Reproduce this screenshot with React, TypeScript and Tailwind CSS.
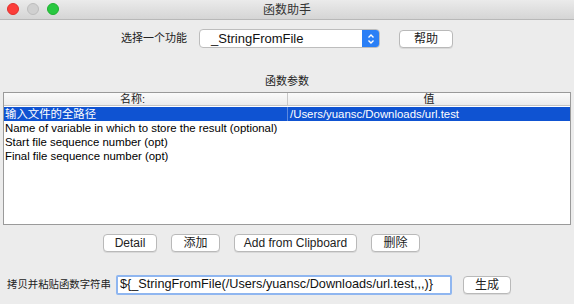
import React from 'react'

const ui = { fontFamily: '"Liberation Sans", "Noto Sans CJK SC", sans-serif' }

function MacButton({ label, w }: { label: string; w: string }) {
  return (
    <div
      className={`${w} h-[18px] flex items-center justify-center rounded-[4px] border border-[#b9b9b9] bg-white text-[12px] text-[#222] shadow-[0_1px_0_rgba(0,0,0,0.08)]`}
    >
      {label}
    </div>
  )
}

export default function App() {
  const rows = [
    'Name of variable in which to store the result (optional)',
    'Start file sequence number (opt)',
    'Final file sequence number (opt)',
  ]

  return (
    <div className="w-[574px] h-[304px] bg-[#ececec] flex flex-col overflow-hidden" style={ui}>
      {/* title bar */}
      <div className="relative h-[20px] shrink-0 flex items-center justify-center bg-gradient-to-b from-[#ebebeb] to-[#d5d5d5] border-b border-[#b8b8b8]">
        <div className="absolute left-[7px] top-[3px] flex gap-[8px]">
          <div className="w-[12px] h-[12px] rounded-full bg-[#fc3d39] border border-[#e0302c]" />
          <div className="w-[12px] h-[12px] rounded-full bg-[#d0d0d0] border border-[#bdbdbd]" />
          <div className="w-[12px] h-[12px] rounded-full bg-[#28c840] border border-[#1fb131]" />
        </div>
        <span className="text-[12px] text-[#333]">函数助手</span>
      </div>

      {/* function select */}
      <div className="mt-[9px] h-[19px] flex items-center justify-center">
        <span className="text-[11px] text-[#222] whitespace-nowrap">选择一个功能</span>
        <div className="ml-[12px] w-[181px] h-[19px] flex items-stretch rounded-[4px] border border-[#bdbdbd] bg-white overflow-hidden">
          <span className="flex-1 pl-[11px] text-[13px] leading-[17px] text-[#111]">_StringFromFile</span>
          <div className="w-[17px] bg-[#2a7ff6] flex items-center justify-center">
            <svg width="8" height="12" viewBox="0 0 8 12" fill="none" stroke="white" strokeWidth="1.4">
              <path d="M1.5 4.5 L4 2 L6.5 4.5" />
              <path d="M1.5 7.5 L4 10 L6.5 7.5" />
            </svg>
          </div>
        </div>
        <div className="ml-[19px]">
          <MacButton label="帮助" w="w-[54px]" />
        </div>
      </div>

      <div className="mt-[26px] text-center text-[11px] leading-[14px] text-[#222]">函数参数</div>

      {/* table */}
      <div className="mt-[4px] mx-[3px] h-[133px] border border-[#9a9a9a] bg-white flex flex-col text-[11.4px]">
        <div className="h-[13px] flex bg-gradient-to-b from-[#fbfbfb] to-[#ececec] border-b border-[#c4c4c4] text-[#222] leading-[12px] text-[11px]">
          <div className="w-[284px] text-center pr-[26px] border-r border-[#c8c8c8]">名称:</div>
          <div className="flex-1 text-center">值</div>
        </div>
        <div className="h-[14px] mt-[1px] flex bg-[#0f53d2] text-white leading-[14px]">
          <div className="w-[284px] pl-[1px] border-r border-[#5c88df]">输入文件的全路径</div>
          <div className="flex-1 pl-[2px]">/Users/yuansc/Downloads/url.test</div>
        </div>
        {rows.map(r => (
          <div key={r} className="h-[14px] pl-[1px] leading-[14px] text-black">{r}</div>
        ))}
      </div>

      {/* action buttons */}
      <div className="mt-[9px] pl-[103px] flex gap-[14px]">
        <MacButton label="Detail" w="w-[54px]" />
        <MacButton label="添加" w="w-[49px]" />
        <MacButton label="Add from Clipboard" w="w-[123px]" />
        <MacButton label="删除" w="w-[49px]" />
      </div>

      {/* result string */}
      <div className="mt-[23px] pl-[7px] flex items-center">
        <span className="w-[109px] text-[10.4px] text-[#222] whitespace-nowrap">拷贝并粘贴函数字符串</span>
        <div className="w-[336px] h-[20px] border-2 border-[#8fb6f0] rounded-[2px] bg-white flex items-center pl-[2px] text-[12.7px] text-[#111] whitespace-nowrap overflow-hidden">
          {'${_StringFromFile(/Users/yuansc/Downloads/url.test,,,)}'}
        </div>
        <div className="ml-[11px]">
          <MacButton label="生成" w="w-[48px]" />
        </div>
      </div>
    </div>
  )
}
